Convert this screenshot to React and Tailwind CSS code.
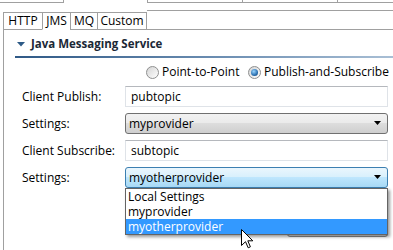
import React from "react"

function Radio ({ checked }) {
  return (
    <div className="w-[13px] h-[13px] rounded-full border border-[#8e8f8f] bg-[linear-gradient(135deg,#d4d4d4,#ffffff)] flex items-center justify-center">
      {checked && <div className="w-[7px] h-[7px] rounded-full bg-[radial-gradient(circle_at_40%_35%,#9ad6ff,#2a6fb0_60%,#123d66)]" />}
    </div>
  )
}

function Arrow () {
  return (
    <svg width="8" height="5" viewBox="0 0 8 5" className="shrink-0">
      <path d="M0 0 H7 L3.5 4 Z" fill="#000" />
    </svg>
  )
}

function TextField ({ value }) {
  return (
    <div className="w-[263px] h-[21px] border border-[#dfe3e8] border-t-[#b5b8bd] bg-white flex items-center pl-[5px]">
      {value}
    </div>
  )
}

function Combo ({ value, focused }) {
  return (
    <div className={focused
      ? "w-[263px] h-[21px] rounded-[3px] border border-[#3c7fb1] bg-[linear-gradient(#eaf6fd,#d9f0fc_45%,#bee6fd_50%,#a7d9f5)] flex items-center pl-[3px] pr-[5px]"
      : "w-[263px] h-[21px] rounded-[3px] border border-[#707070] bg-[linear-gradient(#f2f2f2,#ebebeb_45%,#dddddd_50%,#cfcfcf)] flex items-center pl-[3px] pr-[5px]"}>
      <span className="flex-1">{value}</span>
      <Arrow />
    </div>
  )
}

const tabs = [
  { name: 'HTTP', w: 'w-[39px]' },
  { name: 'JMS', w: 'w-[28px]', active: true },
  { name: 'MQ', w: 'w-[27px]' },
  { name: 'Custom', w: 'w-[50px]' },
]

export default function App () {
  return (
    <div className="relative w-[393px] h-[250px] overflow-hidden bg-white text-[12px] leading-[16px] text-black font-['Open_Sans','Noto_Sans',sans-serif]">
      {/* stuff above the tab folder */}
      <div className="flex h-[3px]">
        <div className="w-[64px] border-r border-b border-[#a0a0a0]" />
        <div className="w-[83px]" />
        <div className="flex-1 flex border-l border-b border-[#a0a0a0]">
          <div className="w-[95px] border-r border-[#a0a0a0]" />
          <div className="w-[95px] border-r border-[#a0a0a0]" />
        </div>
      </div>

      {/* tabs */}
      <div className="flex items-end h-[20px] mt-[7px] ml-[3px]">
        {tabs.map((t, i) => (
          <div key={t.name} className={
            "h-[18px] flex items-center justify-center border-t border-l border-[#a0a0a0] bg-white " + t.w +
            (t.active ? " border-b border-b-white" : " border-b") +
            (i == tabs.length - 1 ? " border-r" : "")
          }>{t.name}</div>
        ))}
        <div className="flex-1 h-[20px] border-t border-b border-[#a0a0a0]" />
      </div>

      {/* panel */}
      <div className="ml-[3px] border-l border-[#a0a0a0] h-[220px] pl-[11px] pt-[6px]">
        <div className="flex items-center h-[16px]">
          <svg width="8" height="5" viewBox="0 0 8 5" className="ml-[2px]">
            <path d="M0 0 H8 L4 4.5 Z" fill="#2d5a86" />
          </svg>
          <span className="ml-[6px] font-bold text-[11.5px] text-[#1b2836]">Java Messaging Service</span>
        </div>
        <div className="mt-[4px] h-[2px] bg-[linear-gradient(90deg,#2f5986,#6d8fb3_55%,#a9bfd5)]" />

        <div className="flex items-center h-[16px] mt-[6px] pl-[131px]">
          <div className="w-[102px] flex items-center gap-[3px]">
            <Radio />
            <span>Point-to-Point</span>
          </div>
          <div className="flex items-center gap-[3px]">
            <Radio checked />
            <span>Publish-and-Subscribe</span>
          </div>
        </div>

        <div className="mt-[6px] pl-[7px] flex flex-col gap-[6px]">
          <div className="flex items-center">
            <span className="w-[103px]">Client Publish:</span>
            <TextField value="pubtopic" />
          </div>
          <div className="flex items-center">
            <span className="w-[103px]">Settings:</span>
            <Combo value="myprovider" />
          </div>
          <div className="flex items-center">
            <span className="w-[103px]">Client Subscribe:</span>
            <TextField value="subtopic" />
          </div>
          <div className="flex items-center relative">
            <span className="w-[103px]">Settings:</span>
            <Combo value="myotherprovider" focused />

            {/* button partly hidden behind the list */}
            <div className="absolute left-[265px] top-[48px] w-[101px] h-[22px] rounded-[3px] border border-[#8a8a8a] bg-[linear-gradient(#f2f2f2,#dddddd)]" />

            {/* open list */}
            <div className="absolute left-[103px] top-[21px] w-[263px] border border-[#646464] bg-white leading-[15px] shadow-[2px_2px_3px_rgba(0,0,0,0.4)]">
              <div className="h-[15px] pl-[2px]">Local Settings</div>
              <div className="h-[15px] pl-[2px]">myprovider</div>
              <div className="h-[15px] pl-[2px] bg-[#3399ff] text-white">myotherprovider</div>
            </div>
          </div>
        </div>
      </div>

      {/* mouse pointer */}
      <svg className="absolute left-[241px] top-[229px]" width="13" height="20" viewBox="0 0 13 20">
        <path d="M0.5 0.5 V16.5 L4.5 12.7 L7.2 18.8 L9.4 17.8 L6.8 11.8 H11.8 Z" fill="#fff" stroke="#000" strokeWidth="1" strokeLinejoin="miter" />
      </svg>
    </div>
  )
}
